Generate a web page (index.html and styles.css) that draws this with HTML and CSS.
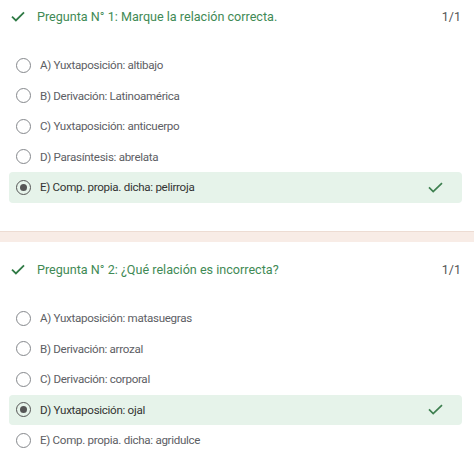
FILE: index.html
```html
<!DOCTYPE html>
<html lang="es">
<head>
<meta charset="utf-8">
<link rel="stylesheet" href="styles.css">
</head>
<body>
<section class="card first">
  <div class="head">
    <svg class="hcheck" viewBox="0 0 14 11" width="14" height="11"><path d="M1 5.6 L4.9 9.4 L13 1.3" fill="none" stroke="currentColor" stroke-width="1.8"/></svg>
    <span class="title">Pregunta N° 1: Marque la relación correcta.</span>
    <span class="score">1/1</span>
  </div>
  <ul class="opts">
    <li class="opt"><span class="radio"></span><span class="lbl">A) Yuxtaposición: altibajo</span></li>
    <li class="opt"><span class="radio"></span><span class="lbl">B) Derivación: Latinoamérica</span></li>
    <li class="opt"><span class="radio"></span><span class="lbl">C) Yuxtaposición: anticuerpo</span></li>
    <li class="opt"><span class="radio"></span><span class="lbl">D) Parasíntesis: abrelata</span></li>
    <li class="opt sel"><span class="radio"></span><span class="lbl">E) Comp. propia. dicha: pelirroja</span>
      <svg class="ocheck" viewBox="0 0 15 11" width="15" height="11"><path d="M1 5.4 L5.2 9.5 L14 1.2" fill="none" stroke="currentColor" stroke-width="1.7"/></svg></li>
  </ul>
</section>
<div class="band"></div>
<section class="card">
  <div class="head">
    <svg class="hcheck" viewBox="0 0 14 11" width="14" height="11"><path d="M1 5.6 L4.9 9.4 L13 1.3" fill="none" stroke="currentColor" stroke-width="1.8"/></svg>
    <span class="title">Pregunta N° 2: ¿Qué relación es incorrecta?</span>
    <span class="score">1/1</span>
  </div>
  <ul class="opts">
    <li class="opt"><span class="radio"></span><span class="lbl">A) Yuxtaposición: matasuegras</span></li>
    <li class="opt"><span class="radio"></span><span class="lbl">B) Derivación: arrozal</span></li>
    <li class="opt"><span class="radio"></span><span class="lbl">C) Derivación: corporal</span></li>
    <li class="opt sel"><span class="radio"></span><span class="lbl">D) Yuxtaposición: ojal</span>
      <svg class="ocheck" viewBox="0 0 15 11" width="15" height="11"><path d="M1 5.4 L5.2 9.5 L14 1.2" fill="none" stroke="currentColor" stroke-width="1.7"/></svg></li>
    <li class="opt"><span class="radio"></span><span class="lbl">E) Comp. propia. dicha: agridulce</span></li>
  </ul>
</section>
</body>
</html>
```
FILE: styles.css
```css
* { box-sizing: border-box; }
html, body { margin: 0; padding: 0; background: #fff; }
body { font-family: Roboto, "Liberation Sans", Arial, sans-serif; width: 474px; }
.card { padding: 0 0 28.5px; }
.card + .band + .card { padding-top: 11px; padding-bottom: 0; }
.head {
  height: 32px;
  display: flex;
  align-items: center;
  padding: 0 13px 0 11px;
}
.hcheck { color: #2f7a45; margin-right: 12px; flex: none; }
.title { color: #3f8a55; font-size: 12.6px; flex: 1; white-space: nowrap; }
.score { color: #555; font-size: 12.5px; }
.opts { list-style: none; margin: 18px 0 0; padding: 0; }
.opt {
  height: 30.5px;
  margin: 0 12px 0 9px;
  padding: 0 19px 0 7px;
  display: flex;
  align-items: center;
  border-radius: 4px;
}
.radio {
  width: 15px; height: 15px;
  border: 1.9px solid #85888c;
  border-radius: 50%;
  flex: none;
  margin-right: 9px;
  display: flex; align-items: center; justify-content: center;
}
.lbl { color: #5d6064; font-size: 11.6px; letter-spacing: -0.3px; flex: 1; white-space: nowrap; }
.sel { background: #e6f3ea; }
.sel .radio { border-color: #555; }
.sel .radio::after { content: ""; width: 7px; height: 7px; border-radius: 50%; background: #555; }
.sel .lbl { color: #333; }
.ocheck { color: #3d7f4f; flex: none; }
.band {
  height: 11px;
  background: #f8ece6;
  border-top: 1px solid #eddcd3;
}
```
